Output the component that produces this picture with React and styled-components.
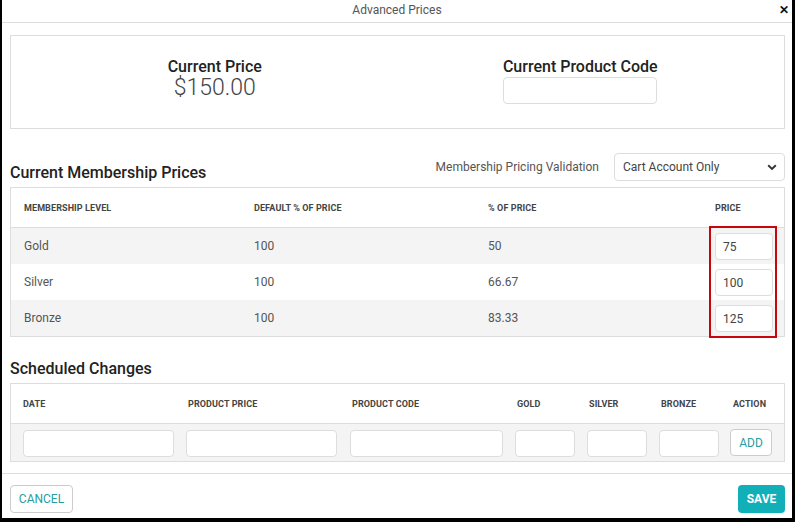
import React from 'react';
import styled, {createGlobalStyle} from 'styled-components';

const GlobalStyle = createGlobalStyle`
  html, body {
    margin: 0;
    padding: 0;
    background: #000;
  }
  body {
    font-family: Roboto, "Liberation Sans", sans-serif;
    color: #333;
  }
  * { box-sizing: border-box; }
`;

const members = [
  {level: 'Gold', def: '100', pct: '50', price: '75'},
  {level: 'Silver', def: '100', pct: '66.67', price: '100'},
  {level: 'Bronze', def: '100', pct: '83.33', price: '125'},
];

const memberCols = '230px 234px 227px 1fr';
const scheduleCols = '165px 164px 165px 72px 72px 72px 1fr';

const App = () => {
  return (
    <Frame>
      <GlobalStyle />
      <Modal>
        <TitleBar>
          Advanced Prices
          <Close>✕</Close>
        </TitleBar>

        <Body>
          <SummaryBox>
            <SummaryCol>
              <SummaryLabel>Current Price</SummaryLabel>
              <BigPrice>$150.00</BigPrice>
            </SummaryCol>
            <SummaryCol>
              <SummaryLabel>Current Product Code</SummaryLabel>
              <Field w={154} />
            </SummaryCol>
          </SummaryBox>

          <SectionHead>
            <SectionTitle>Current Membership Prices</SectionTitle>
            <Validation>
              <ValidationLabel>Membership Pricing Validation</ValidationLabel>
              <Select>
                Cart Account Only
                <svg width="10" height="7" viewBox="0 0 10 7">
                  <path d="M1.2 1.3 L5 5 L8.8 1.3" fill="none" stroke="#333" strokeWidth="1.9" />
                </svg>
              </Select>
            </Validation>
          </SectionHead>

          <TableBox>
            <Grid cols={memberCols}>
              <Th>Membership Level</Th>
              <Th>Default % of Price</Th>
              <Th>% of Price</Th>
              <Th>Price</Th>
            </Grid>
            <MemberRows>
              {members.map((m, i) => (
                <Row key={m.level} cols={memberCols} shade={i % 2 === 0}>
                  <Td>{m.level}</Td>
                  <Td>{m.def}</Td>
                  <Td>{m.pct}</Td>
                  <Td><Field w={58} value={m.price} readOnly pad={7} /></Td>
                </Row>
              ))}
              <Highlight />
            </MemberRows>
          </TableBox>

          <SectionHead short>
            <SectionTitle>Scheduled Changes</SectionTitle>
          </SectionHead>

          <TableBox>
            <Grid cols={scheduleCols} left={12}>
              <Th>Date</Th>
              <Th>Product Price</Th>
              <Th>Product Code</Th>
              <Th>Gold</Th>
              <Th>Silver</Th>
              <Th>Bronze</Th>
              <Th>Action</Th>
            </Grid>
            <Row cols="163px 164px 165px 72px 72px 72px 1fr" shade tall left={12}>
              <Field w={151} />
              <Field w={151} />
              <Field w={153} />
              <Field w={60} />
              <Field w={60} />
              <Field w={60} />
              <AddButton>ADD</AddButton>
            </Row>
          </TableBox>
        </Body>

        <Footer>
          <CancelButton>CANCEL</CancelButton>
          <SaveButton>SAVE</SaveButton>
        </Footer>
      </Modal>
    </Frame>
  );
};

const Frame = styled.div`
  width: 795px;
  height: 522px;
  padding: 0 3px 4px 2px;
  background: #000;
`;

const Modal = styled.div`
  width: 790px;
  height: 518px;
  background: #fff;
  display: flex;
  flex-direction: column;
`;

const TitleBar = styled.div`
  position: relative;
  height: 23px;
  border-bottom: 1px solid #ddd;
  display: flex;
  align-items: center;
  justify-content: center;
  font-size: 12px;
  color: #555;
  padding-bottom: 2px;
`;

const Close = styled.span`
  position: absolute;
  right: 3px;
  top: 3px;
  font-size: 12px;
  font-weight: 900;
  color: #111;
`;

const Body = styled.div`
  flex: 1;
  padding: 12px 7px 0 8px;
`;

const SummaryBox = styled.div`
  height: 94px;
  border: 1px solid #ddd;
  display: grid;
  grid-template-columns: 1fr 1fr;
  padding: 0 21px;
`;

const SummaryCol = styled.div`
  display: flex;
  flex-direction: column;
  align-items: center;
  padding-top: 22px;
`;

const SummaryLabel = styled.div`
  font-size: 16px;
  font-weight: 500;
  color: #222;
  line-height: 18px;
`;

const BigPrice = styled.div`
  font-size: 23px;
  font-weight: 300;
  color: #444;
  line-height: 24px;
`;

const Field = styled.input`
  width: ${p => p.w}px;
  height: 27px;
  border: 1px solid #ddd;
  border-radius: 4px;
  background: #fff;
  font-family: Roboto, "Liberation Sans", sans-serif;
  font-size: 12px;
  color: #444;
  padding: 0 ${p => p.pad || 8}px;
  margin-top: 1px;
  outline: none;
`;

const SectionHead = styled.div`
  height: ${p => p.short ? '46px' : '58px'};
  display: flex;
  align-items: flex-end;
  justify-content: space-between;
  padding-bottom: 5px;
`;

const SectionTitle = styled.div`
  font-size: 16px;
  font-weight: 500;
  color: #222;
  line-height: 18px;
`;

const Validation = styled.div`
  display: flex;
  align-items: center;
  gap: 15px;
  margin-bottom: 1px;
`;

const ValidationLabel = styled.span`
  font-size: 12px;
  color: #555;
`;

const Select = styled.div`
  width: 171px;
  height: 28px;
  border: 1px solid #ddd;
  border-radius: 4px;
  display: flex;
  align-items: center;
  justify-content: space-between;
  padding: 0 7px 0 8px;
  font-size: 12px;
  color: #444;
`;

const TableBox = styled.div`
  border: 1px solid #ddd;
`;

const Grid = styled.div`
  display: grid;
  grid-template-columns: ${p => p.cols};
  height: 40px;
  align-items: center;
  padding-left: ${p => p.left || 13}px;
  border-bottom: 1px solid #ddd;
`;

const Th = styled.div`
  font-size: 9px;
  font-weight: 700;
  text-transform: uppercase;
  color: #444;
  letter-spacing: 0.1px;
`;

const MemberRows = styled.div`
  position: relative;
`;

const Row = styled.div`
  display: grid;
  grid-template-columns: ${p => p.cols};
  height: ${p => p.tall ? '37px' : '36px'};
  align-items: center;
  padding-left: ${p => p.left || 13}px;
  background: ${p => p.shade ? '#f4f4f4' : '#fff'};
`;

const Td = styled.div`
  font-size: 12px;
  color: #555;
`;

const Highlight = styled.div`
  position: absolute;
  left: 698px;
  top: -2px;
  width: 68px;
  height: 112px;
  border: 2px solid #c8050b;
  pointer-events: none;
`;

const AddButton = styled.button`
  width: 42px;
  height: 27px;
  border: 1px solid #ccc;
  border-radius: 4px;
  background: #fff;
  color: #2a9ca0;
  font-family: Roboto, "Liberation Sans", sans-serif;
  font-size: 12px;
  padding: 0;
  margin-left: -1px;
`;

const Footer = styled.div`
  height: 45px;
  border-top: 1px solid #ddd;
  display: flex;
  align-items: flex-end;
  justify-content: space-between;
  padding: 0 7px 5px 8px;
`;

const CancelButton = styled.button`
  width: 63px;
  height: 28px;
  border: 1px solid #ccc;
  border-radius: 4px;
  background: #fff;
  color: #2a9ca0;
  font-family: Roboto, "Liberation Sans", sans-serif;
  font-size: 12px;
  padding: 0;
`;

const SaveButton = styled.button`
  width: 47px;
  height: 28px;
  border: none;
  border-radius: 4px;
  background: #11b0b8;
  color: #fff;
  font-family: Roboto, "Liberation Sans", sans-serif;
  font-size: 12px;
  font-weight: 700;
  padding: 0;
`;

export default App;
